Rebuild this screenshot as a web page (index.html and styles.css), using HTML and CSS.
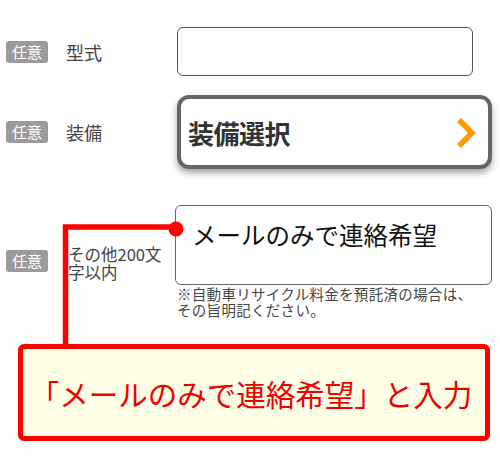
FILE: index.html
```html
<!DOCTYPE html>
<html lang="ja">
<head>
<meta charset="utf-8">
<link rel="stylesheet" href="styles.css">
</head>
<body>
<div class="page">
  <div class="form">
    <div class="row r1">
      <span class="badge">任意</span>
      <span class="label">型式</span>
      <div class="field"><div class="input"></div></div>
    </div>
    <div class="row r2">
      <span class="badge">任意</span>
      <span class="label">装備</span>
      <div class="field">
        <div class="select-btn">
          <span class="select-text">装備選択</span>
          <svg class="chev" width="20" height="32" viewBox="0 0 20 32"><polyline points="3,3 16,16 3,29" fill="none" stroke="#ff9900" stroke-width="5.5"/></svg>
        </div>
      </div>
    </div>
    <div class="row r3">
      <span class="badge">任意</span>
      <span class="label small">その他200文字以内</span>
      <div class="field">
        <div class="textarea">メールのみで連絡希望</div>
        <p class="note">※自動車リサイクル料金を預託済の場合は、<br>その旨明記ください。</p>
      </div>
    </div>
  </div>
  <div class="callout">「メールのみで連絡希望」と入力</div>
  <svg class="annot" width="500" height="470" viewBox="0 0 500 470">
    <path d="M65.5 346 V227 H176" fill="none" stroke="#ff0000" stroke-width="5.5"/>
    <circle cx="176" cy="229" r="7.5" fill="#ff0000"/>
  </svg>
</div>
</body>
</html>
```
FILE: styles.css
```css
html, body {
  margin: 0;
  padding: 0;
  background: #fff;
}
body {
  font-family: "Noto Sans CJK JP", "Noto Sans", sans-serif;
  color: #333;
}
.page {
  position: relative;
  width: 500px;
  height: 470px;
  overflow: hidden;
}
.form {
  padding-top: 27px;
}
.row {
  display: flex;
  align-items: center;
}
.r2 { margin-top: 19px; }
.r3 { margin-top: 36px; }
.badge {
  margin-left: 6px;
  width: 42px;
  height: 22px;
  background: #9b9b9b;
  color: #fff;
  border-radius: 3px;
  font-size: 15px;
  line-height: 22px;
  text-align: center;
  flex: none;
}
.label {
  margin-left: 18px;
  width: 100px;
  font-size: 18px;
  line-height: 20px;
  color: #444;
  flex: none;
}
.label.small {
  margin-left: 20px;
  width: 98px;
  font-size: 16.5px;
  line-height: 18px;
  margin-top: 4px;
}
.field {
  margin-left: 11px;
  width: 316px;
  flex: none;
}
.input {
  width: 296px;
  height: 49px;
  box-sizing: border-box;
  border: 1px solid #555;
  border-radius: 6px;
  background: #fff;
}
.select-btn {
  width: 315px;
  height: 74px;
  box-sizing: border-box;
  border: 4px solid #666;
  border-radius: 12px;
  background: #fff;
  box-shadow: 0 4px 6px rgba(0, 0, 0, 0.35);
  display: flex;
  align-items: center;
  justify-content: space-between;
  padding: 0 12px 0 7px;
}
.select-text {
  font-size: 26px;
  font-weight: bold;
  color: #333;
  letter-spacing: -0.5px;
}
.chev {
  display: block;
  margin-top: 2px;
}
.textarea {
  width: 317px;
  height: 80px;
  margin-left: -2px;
  box-sizing: border-box;
  border: 1px solid #666;
  border-radius: 6px;
  background: #fff;
  padding: 14px 16px 0;
  font-size: 24.5px;
  line-height: 30px;
  color: #111;
}
.note {
  margin: 1px 0 0 0;
  font-size: 14.5px;
  line-height: 15.5px;
  letter-spacing: 0.3px;
  color: #444;
  white-space: nowrap;
}
.callout {
  margin: 27px 0 0 18px;
  width: 472px;
  height: 97px;
  box-sizing: border-box;
  border: 5px solid #ff0000;
  border-radius: 6px;
  background: #ffffe6;
  color: #ee0000;
  font-size: 29.5px;
  display: flex;
  align-items: center;
  justify-content: center;
  padding-right: 6px;
}
.annot {
  position: absolute;
  left: 0;
  top: 0;
  pointer-events: none;
}
```
